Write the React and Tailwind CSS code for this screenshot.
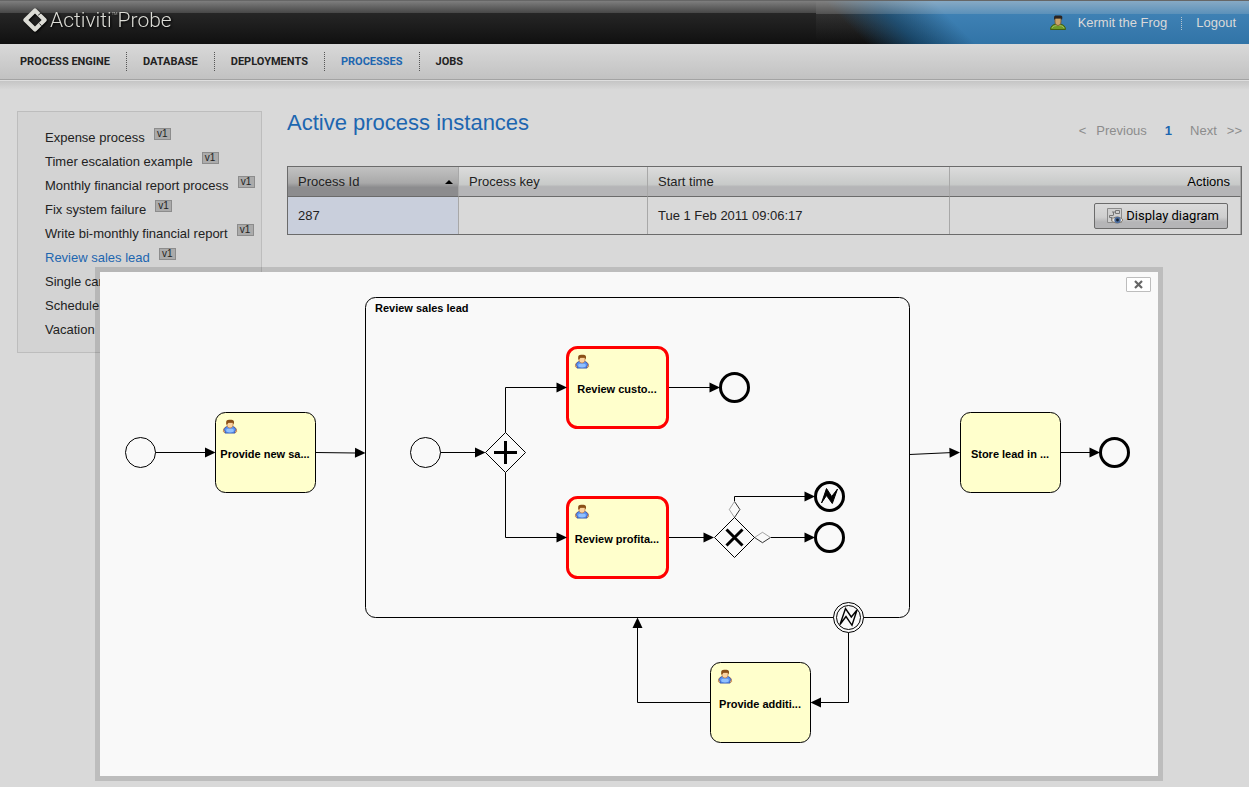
import React from "react";

const NAV = ["PROCESS ENGINE", "DATABASE", "DEPLOYMENTS", "PROCESSES", "JOBS"];

const PROCESSES = [
  "Expense process",
  "Timer escalation example",
  "Monthly financial report process",
  "Fix system failure",
  "Write bi-monthly financial report",
  "Review sales lead",
  "Single card example",
  "Schedule meeting",
  "Vacation",
];

function Logo() {
  return (
    <a href="#home" className="flex items-center gap-[3px] text-[#dcdcd6] drop-shadow-[1px_1px_1px_#000]">
      <svg width="24" height="24" viewBox="0 0 24 24" aria-hidden="true">
        <path
          d="M10.600.9a2 2 0 0 1 2.800 0l9.700 9.700a2 2 0 0 1 0 2.800l-9.700 9.700a2 2 0 0 1-2.800 0L.9 13.400a2 2 0 0 1 0-2.800zM12 5.400 5.400 12 12 18.600 18.600 12z"
          fill="currentColor"
          fillRule="evenodd"
        />
        <path d="M15.200 7.200 18 5M18.500 17.800 16.500 15.500" stroke="#1c1c1c" strokeWidth="0.900" />
      </svg>
      <span className="flex text-[21px] leading-6 font-light font-[Roboto,sans-serif]">
        Activiti
        <span className="pt-1 text-[4px] leading-none">TM</span>
        Probe
      </span>
    </a>
  );
}

function KermitIcon() {
  return (
    <svg width="16" height="16" viewBox="0 0 16 16" aria-hidden="true">
      <path d="M.5 14.500C.5 11 3 9.500 6 9h4c3 .5 5.500 2 5.500 5.500z" fill="#6f9a28" stroke="#3f5f14" />
      <path d="M2 13c1-2 3-2.500 6-2.500s5 .5 6 2.500" fill="none" stroke="#9dbd62" />
      <path d="M5 3h6v4c0 2-1.500 3.500-3 3.500S5 9 5 7z" fill="#c9a26a" stroke="#7a5527" strokeWidth=".8" />
      <path d="M4 5V2.500C4 1 5 .5 6 .5h4.500C12 .5 12.500 1.500 12.300 3L12 5l-1-1.500H5.500z" fill="#2a2422" />
    </svg>
  );
}

function DiagramIcon() {
  return (
    <svg width="16" height="16" viewBox="0 0 16 16" aria-hidden="true">
      <path d="M.5.500h14v14H.5z" fill="#cfcfcf" stroke="#8a8a8a" />
      <path d="M8.500 2.500h4v3h-4zM5 4h3M6.500 4v3M2.500 7.500h4M2.500 7.500v2h3M4.500 9.500V13H6" fill="none" stroke="#777" />
      <path d="M4.500 12c2-4 9-4 11.500 0-2.500 4-9.500 4-11.500 0z" fill="#e2e2e2" stroke="#8d8070" />
      <circle cx="10.500" cy="12" r="3.200" fill="#4d6d9d" />
      <circle cx="10.500" cy="12" r="1.400" fill="#16202f" />
    </svg>
  );
}

function Person({ x, y }) {
  return (
    <g transform={`translate(${x} ${y})`}>
      <path d="M2.500 7.500C1 8.500.4 10 .4 12c.5 1.300 2 1.300 3 1zM11.500 7.500C13 8.500 13.600 10 13.600 12c-.5 1.300-2 1.300-3 1z" fill="#f6bf80" stroke="#b4682e" strokeWidth=".7" />
      <path d="M2.200 13.600C2.600 12 1.500 10.800 1.200 10 2 8 3.500 7 5 6.600h4c1.500.4 3 1.400 3.800 3.400-.3.800-1.400 2-1 3.600z" fill="#5b93f2" stroke="#2b4fb0" strokeWidth=".8" />
      <ellipse cx="7" cy="11" rx="3.800" ry="1.900" fill="#8fc0ff" />
      <path d="M4 3h6v2.500C10 7.500 8.500 8.500 7 8.500S4 7.500 4 5.500z" fill="#fbd3a0" stroke="#b4682e" strokeWidth=".6" />
      <path d="M3.200 5V2.500C3.200 1 4.500.3 6 .3h2.500c1.700 0 2.500 1 2.500 2.200V5l-1.200-1.800H5.500L4 5z" fill="#8a5018" />
    </g>
  );
}

function Task({ x, y, label, active, person = true }) {
  return (
    <g>
      <rect x={x} y={y} width="100" height="80" rx="10" fill="#ffffcc" stroke={active ? "#ff0000" : "#000"} strokeWidth={active ? 3 : 1} />
      {person && <Person x={x + 7.5} y={y + 7} />}
      <text x={x + 49.5} y={y + 45.5} textAnchor="middle">{label}</text>
    </g>
  );
}

function Arrow({ x, y, angle = 0 }) {
  return <path d="M0 0-10.500-5V5z" transform={`translate(${x} ${y}) rotate(${angle})`} />;
}

function ProcessDiagram() {
  return (
    <svg
      viewBox="100 272 1058 504"
      role="img"
      aria-label="Review sales lead process"
      className="block w-full font-['Liberation_Sans',Arial,sans-serif] text-[11px] font-bold"
    >
      <g fill="none" stroke="#000">
        <rect x="365.500" y="297.500" width="544" height="320" rx="10" />
        <path d="M155.500 452.500H206M315.500 452.500 356 453M440.500 452.500H476M505.500 432.500V387.500H558M505.500 472.500V537.500H558M668 387.500H710M668 537.500H704M734.500 501V496.500H806M771 537.500H806M909.500 454.500 951 452.600M1060.500 452.500H1091M848.500 632.500V702.500H820M710.500 702.500H637.500V627" />
        <circle cx="140.500" cy="452.500" r="15" />
        <circle cx="425.500" cy="452.500" r="15" />
        <path d="M505.500 432.500 525.500 452.500 505.500 472.500 485.500 452.500z" />
        <path d="M734.500 517.500 754.500 537.500 734.500 557.500 714.500 537.500z" />
        <path d="M734.500 501.500 739.900 509.500 734.500 517.500M754.500 537.500 762.500 542.700 770.500 537.500" strokeWidth=".8" />
        <path d="M734.500 501.500 729.300 509.500 734.500 517.500M754.500 537.500 762.500 532.300 770.500 537.500" strokeWidth=".35" />
        <path d="M494 452.500H517M505.500 441V464" strokeWidth="3" />
        <path d="M726.500 529.500 742.500 545.500M742.500 529.500 726.500 545.500" strokeWidth="3" />
        <g strokeWidth="3">
          <circle cx="734.500" cy="387.500" r="14" />
          <circle cx="829.500" cy="496.500" r="14" />
          <circle cx="829.500" cy="537.500" r="14" />
          <circle cx="1114.500" cy="452.500" r="14" />
        </g>
        <circle cx="848.500" cy="617.500" r="15" fill="#f9f9f9" />
        <circle cx="848.500" cy="617.500" r="12" />
        <path d="M840 624.500 845.500 608.500 851.300 617 857 610 852 625.300 846 616.500z" strokeWidth="1.400" />
        <path d="M821.500 503 826.500 488.500 831.700 496.500 837.500 489 832.300 503.500 826.500 495.500z" fill="#000" />
      </g>
      <Task x={215.5} y={412.5} label="Provide new sa..." />
      <Task x={567.5} y={347.5} label="Review custo..." active />
      <Task x={567.5} y={497.5} label="Review profita..." active />
      <Task x={710.5} y={662.5} label="Provide additi..." />
      <Task x={960.5} y={412.5} label="Store lead in ..." person={false} />
      <Arrow x={215.5} y={452.5} />
      <Arrow x={365.5} y={453} angle={1} />
      <Arrow x={485.5} y={452.5} />
      <Arrow x={567} y={387.5} />
      <Arrow x={567} y={537.5} />
      <Arrow x={720} y={387.5} />
      <Arrow x={714} y={537.5} />
      <Arrow x={815} y={496.5} />
      <Arrow x={815} y={537.5} />
      <Arrow x={960} y={452.5} angle={-2} />
      <Arrow x={1100} y={452.5} />
      <Arrow x={810.5} y={702.5} angle={180} />
      <Arrow x={637.5} y={617.5} angle={-90} />
      <text x="375" y="312">Review sales lead</text>
    </svg>
  );
}

export default function App() {
  return (
    <div className="relative min-h-screen bg-[#d9d9d9] font-['Liberation_Sans',Arial,sans-serif] text-[13px] leading-4 text-[#222]">
      <header className="flex h-11 justify-between border-t border-[#666] bg-[linear-gradient(#7e7e7e,#474747_12px,#262626_12px,#101010)]">
        <div className="flex items-start pt-[7px] pl-[23px]">
          <Logo />
        </div>
        <div className="flex w-[433px] items-start justify-end bg-[linear-gradient(rgba(217,217,217,.5),rgba(217,217,217,.24)_13px,rgba(255,255,255,.05)_13px,rgba(0,0,0,.05)),linear-gradient(45deg,transparent_36px,#18486c_72px,#347ab0_113px),linear-gradient(#262626,#262626_12px,#101010)] pt-[14px] pr-[13px] text-[#d9d9d9]">
          <a href="#profile" className="flex gap-3">
            <KermitIcon />
            <span>Kermit the Frog</span>
          </a>
          <span className="mx-[14px] mt-[2px] h-[13px] border-l border-dotted border-[#b5c4d0]" />
          <a href="#logout">Logout</a>
        </div>
      </header>
      <nav className="flex h-9 items-center border-b border-[#a3a3a3] bg-linear-to-b from-[#d9d9d9] to-[#c2c2c2] pl-1 font-[Roboto,sans-serif] text-[11px] font-bold">
        {NAV.map((item, i) => (
          <a
            key={item}
            href={"#" + item.toLowerCase().replace(" ", "-")}
            className={
              "flex h-[19px] items-center px-4 " +
              (i > 0 ? "border-l border-dotted border-[#555] " : "") +
              (item === "PROCESSES" ? "text-[#1d66b0]" : "text-[#222]")
            }
          >
            {item}
          </a>
        ))}
      </nav>
      <div className="h-[10px] border-t border-[#dedede] bg-linear-to-b from-[#c5c5c5] to-[#d9d9d9]" />

      <div className="flex items-start gap-[25px] pr-[7px] pl-[17px]">
        <aside className="mt-[21px] w-[245px] shrink-0 border border-[#bdbdbd] bg-[#d3d3d3] pt-[14px] pb-[10px] pl-[27px]">
          <ul>
            {PROCESSES.map((name) => (
              <li key={name} className="flex h-6 items-start gap-[9px] whitespace-nowrap">
                <a href="#process" className={"pt-1 " + (name === "Review sales lead" ? "text-[#1d66b0]" : "")}>
                  {name}
                </a>
                <span className="mt-[2px] flex h-3 w-[17px] items-center justify-center border border-[#8c8c8c] bg-[#ababab] text-[10px] leading-none">
                  v1
                </span>
              </li>
            ))}
          </ul>
        </aside>

        <main className="min-w-0 flex-1 pt-[19px]">
          <div className="flex items-start justify-between">
            <h1 className="text-[22px] leading-7 text-[#1d66b0]">Active process instances</h1>
            <div className="flex gap-[10px] pt-[14px] text-[#8c8c8c]">
              <span>&lt;</span>
              <a href="#previous">Previous</a>
              <a href="#page-1" className="mx-2 font-bold text-[#1d66b0]">1</a>
              <a href="#next">Next</a>
              <span>&gt;&gt;</span>
            </div>
          </div>
          <table className="mt-[27px] w-full table-fixed border-separate border-spacing-0 border border-[#6b6b6b]">
            <thead>
              <tr className="h-[30px] text-left *:border-r *:border-b *:border-r-[#a8a8a8] *:border-b-[#6b6b6b] *:px-[10px] *:font-normal">
                <th className="w-[171px] bg-[linear-gradient(#c2c2c2,#a9a9a9_55%,#8c8c8e_70%,#8c8c8e)]">
                  <button type="button" className="flex w-full items-center justify-between">
                    Process Id
                    <svg width="8" height="4" viewBox="0 0 8 4" className="-mr-[5px]" aria-hidden="true">
                      <path d="M4 0 8 4H0z" />
                    </svg>
                  </button>
                </th>
                <th className="w-[189px] bg-[linear-gradient(#dcdcdc,#c8cac9_60%,#b5b5b7_68%,#b5b5b7)]">Process key</th>
                <th className="w-[302px] bg-[linear-gradient(#dcdcdc,#c8cac9_60%,#b5b5b7_68%,#b5b5b7)]">Start time</th>
                <th className="bg-[linear-gradient(#dcdcdc,#c8cac9_60%,#b5b5b7_68%,#b5b5b7)] text-right text-black">Actions</th>
              </tr>
            </thead>
            <tbody>
              <tr className="h-[37px] *:border-r *:border-r-[#a8a8a8] *:px-[10px]">
                <td className="bg-[#c9cfdc]">287</td>
                <td />
                <td>Tue 1 Feb 2011 09:06:17</td>
                <td>
                  <div className="flex justify-end pr-[2px]">
                    <button
                      type="button"
                      className="flex h-[26px] items-center gap-[3px] rounded-[2px] border border-[#6b6b6b] bg-[linear-gradient(#dadada,#cfcfcf_55%,#b5b5b7_75%,#b5b5b7)] pr-2 pl-3 font-[Roboto,sans-serif] whitespace-nowrap text-black"
                    >
                      <DiagramIcon />
                      Display diagram
                    </button>
                  </div>
                </td>
              </tr>
            </tbody>
          </table>
        </main>
      </div>

      <div role="dialog" aria-label="Process diagram" className="absolute top-[267px] right-[86px] left-[95px] border-5 border-black/13 bg-[#f9f9f9] bg-clip-padding">
        <button
          type="button"
          aria-label="Close"
          className="absolute top-[5px] right-[7px] flex h-[15px] w-[25px] items-center justify-center rounded-[1px] border border-[#bdbdbd] bg-white"
        >
          <svg width="9" height="9" viewBox="0 0 9 9" aria-hidden="true">
            <path d="M1 1 8 8M8 1 1 8" stroke="#666" strokeWidth="2.200" />
          </svg>
        </button>
        <ProcessDiagram />
      </div>
    </div>
  );
}
